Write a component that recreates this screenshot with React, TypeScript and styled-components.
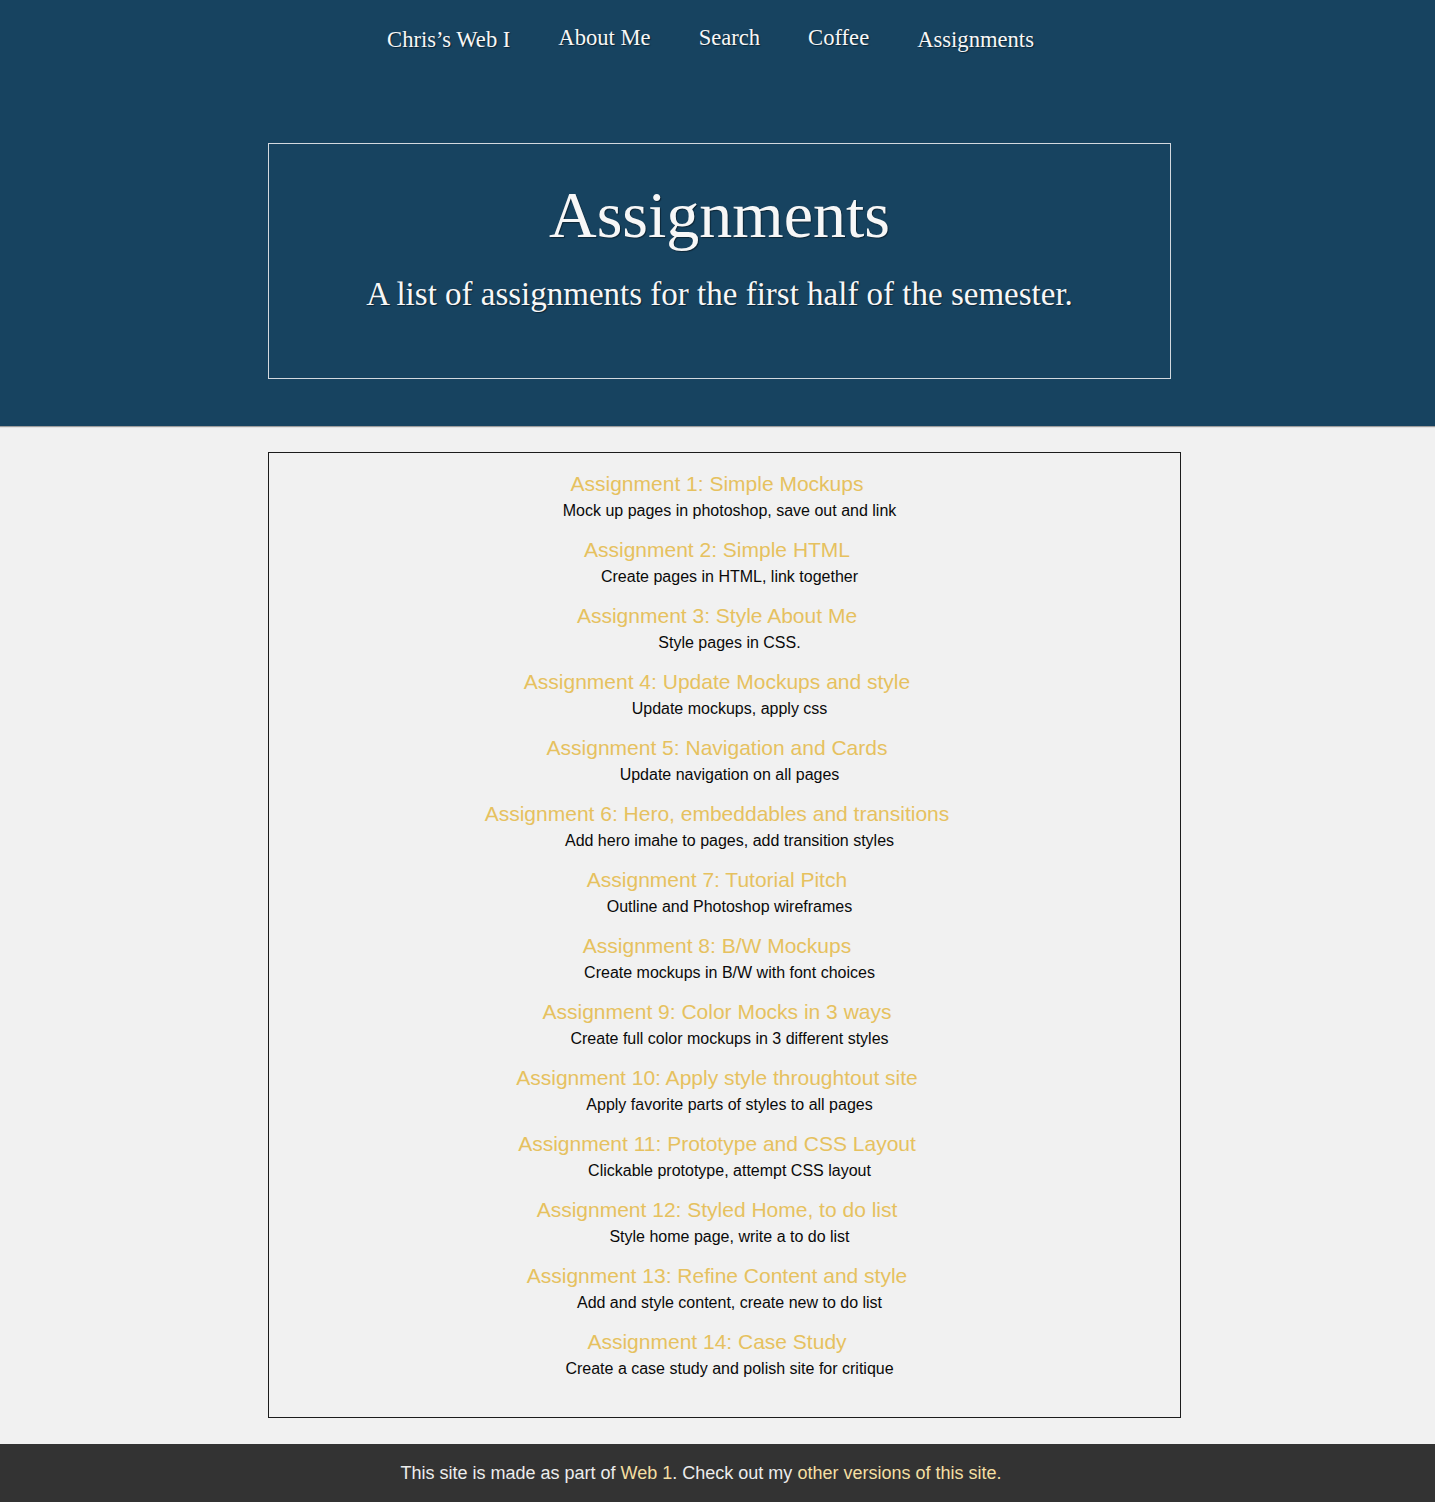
import * as React from 'react';
import styled, { createGlobalStyle } from 'styled-components';

type Assignment = {
  title: string;
  description: string;
};

const assignments: Assignment[] = [
  { title: 'Assignment 1: Simple Mockups', description: 'Mock up pages in photoshop, save out and link' },
  { title: 'Assignment 2: Simple HTML', description: 'Create pages in HTML, link together' },
  { title: 'Assignment 3: Style About Me', description: 'Style pages in CSS.' },
  { title: 'Assignment 4: Update Mockups and style', description: 'Update mockups, apply css' },
  { title: 'Assignment 5: Navigation and Cards', description: 'Update navigation on all pages' },
  { title: 'Assignment 6: Hero, embeddables and transitions', description: 'Add hero imahe to pages, add transition styles' },
  { title: 'Assignment 7: Tutorial Pitch', description: 'Outline and Photoshop wireframes' },
  { title: 'Assignment 8: B/W Mockups', description: 'Create mockups in B/W with font choices' },
  { title: 'Assignment 9: Color Mocks in 3 ways', description: 'Create full color mockups in 3 different styles' },
  { title: 'Assignment 10: Apply style throughtout site', description: 'Apply favorite parts of styles to all pages' },
  { title: 'Assignment 11: Prototype and CSS Layout', description: 'Clickable prototype, attempt CSS layout' },
  { title: 'Assignment 12: Styled Home, to do list', description: 'Style home page, write a to do list' },
  { title: 'Assignment 13: Refine Content and style', description: 'Add and style content, create new to do list' },
  { title: 'Assignment 14: Case Study', description: 'Create a case study and polish site for critique' }
];

const navLinks = ['Chris\u2019s Web I', 'About Me', 'Search', 'Coffee', 'Assignments'];

const GlobalStyle = createGlobalStyle`
  html, body {
    margin: 0;
    padding: 0;
    background-color: #f1f1f1;
  }
  * {
    box-sizing: border-box;
  }
`;

const Page = styled.div`
  display: flex;
  flex-direction: column;
  min-height: 1502px;
`;

const Header = styled.header`
  background-color: #174360;
  padding: 24px 0 47px;
  box-shadow: 0 1px 1px rgba(0, 0, 0, .35);
  font-family: "Liberation Serif", "Times New Roman", serif;
  color: #f7f7f7;
  text-shadow: 1px 1px 1px rgba(0, 0, 0, .45);
`;

const Nav = styled.nav`
  display: flex;
  justify-content: center;
  gap: 48px;
  padding-right: 14px;
  height: 28px;
`;

const NavLink = styled.a<{ $low?: boolean }>`
  font-size: 22.6px;
  line-height: 28px;
  color: #f7f7f7;
  text-decoration: none;
  padding-top: ${({ $low }) => ($low ? '2px' : '0')};
`;

const Hero = styled.section`
  width: 903px;
  margin: 91px 0 0 268px;
  padding: 31px 0 66px;
  border: 1px solid #d3d9df;
  text-align: center;
`;

const HeroTitle = styled.h1`
  margin: 0;
  font-size: 66px;
  line-height: 79px;
  font-weight: 400;
`;

const HeroSubtitle = styled.p`
  margin: 22px 0 0;
  font-size: 33px;
  line-height: 36px;
`;

const Main = styled.main`
  flex: 1;
  padding: 26px 0;
`;

const ListBox = styled.ul`
  list-style: none;
  width: 913px;
  margin: 0 0 0 268px;
  padding: 19px 0 38px;
  border: 1px solid #1c1c1c;
  display: flex;
  flex-direction: column;
  gap: 17px;
  font-family: "Liberation Sans", Arial, sans-serif;
  text-align: center;
`;

const Item = styled.li`
  display: flex;
  flex-direction: column;
  gap: 5px;
`;

const ItemTitle = styled.a`
  font-size: 21px;
  line-height: 24px;
  color: #e6c15f;
  text-decoration: none;
  padding-right: 15px;
`;

const ItemText = styled.p`
  margin: 0;
  font-size: 16px;
  line-height: 20px;
  color: #0a0a0a;
  padding-left: 10px;
`;

const Footer = styled.footer`
  background-color: #333333;
  padding: 19px 33px 19px 0;
  font-family: "Liberation Sans", Arial, sans-serif;
  font-size: 18px;
  line-height: 21px;
  color: #ececec;
  text-align: center;
`;

const FooterLink = styled.a`
  color: #f3dfa2;
  text-decoration: none;
`;

const App = (): JSX.Element => (
  <Page>
    <GlobalStyle />
    <Header>
      <Nav>
        {navLinks.map((label, i) => (
          <NavLink key={label} href="#" $low={i === 0 || i === navLinks.length - 1}>
            {label}
          </NavLink>
        ))}
      </Nav>
      <Hero>
        <HeroTitle>Assignments</HeroTitle>
        <HeroSubtitle>A list of assignments for the first half of the semester.</HeroSubtitle>
      </Hero>
    </Header>
    <Main>
      <ListBox>
        {assignments.map(a => (
          <Item key={a.title}>
            <ItemTitle href="#">{a.title}</ItemTitle>
            <ItemText>{a.description}</ItemText>
          </Item>
        ))}
      </ListBox>
    </Main>
    <Footer>
      This site is made as part of <FooterLink href="#">Web 1</FooterLink>. Check out my{' '}
      <FooterLink href="#">other versions of this site.</FooterLink>
    </Footer>
  </Page>
);

export default App;
